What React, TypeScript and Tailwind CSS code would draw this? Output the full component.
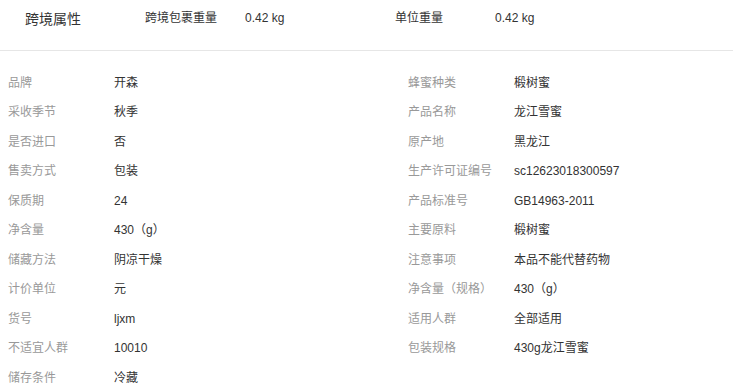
import React from "react";

type Attr = { label: string; value: string };

const LEFT: Attr[] = [
  { label: "品牌", value: "开森" },
  { label: "采收季节", value: "秋季" },
  { label: "是否进口", value: "否" },
  { label: "售卖方式", value: "包装" },
  { label: "保质期", value: "24" },
  { label: "净含量", value: "430（g）" },
  { label: "储藏方法", value: "阴凉干燥" },
  { label: "计价单位", value: "元" },
  { label: "货号", value: "ljxm" },
  { label: "不适宜人群", value: "10010" },
  { label: "储存条件", value: "冷藏" },
];

const RIGHT: Attr[] = [
  { label: "蜂蜜种类", value: "椴树蜜" },
  { label: "产品名称", value: "龙江雪蜜" },
  { label: "原产地", value: "黑龙江" },
  { label: "生产许可证编号", value: "sc12623018300597" },
  { label: "产品标准号", value: "GB14963-2011" },
  { label: "主要原料", value: "椴树蜜" },
  { label: "注意事项", value: "本品不能代替药物" },
  { label: "净含量（规格）", value: "430（g）" },
  { label: "适用人群", value: "全部适用" },
  { label: "包装规格", value: "430g龙江雪蜜" },
];

function AttrRow({ item }: { item: Attr }) {
  return (
    <div className="flex h-[29.5px] items-center pl-2 text-xs">
      <span className="w-[106px] shrink-0 text-[#999]">{item.label}</span>
      <span className="text-[#333]">{item.value}</span>
    </div>
  );
}

export default function App() {
  return (
    <main
      className="h-[391px] w-[733px] overflow-hidden bg-white"
      style={{ fontFamily: '"Liberation Sans", "Noto Sans CJK SC", sans-serif' }}
    >
      <header className="flex h-[51px] items-start border-b border-[#e6e6e6] pl-[25px] pt-[9px] leading-[18px] text-[#333]">
        <span className="w-[120px] text-sm">跨境属性</span>
        <div className="flex w-[250px] pt-px text-xs">
          <span className="w-[100px]">跨境包裹重量</span>
          <span>0.42 kg</span>
        </div>
        <div className="flex w-[250px] pt-px text-xs">
          <span className="w-[100px]">单位重量</span>
          <span>0.42 kg</span>
        </div>
      </header>

      <section className="grid grid-cols-[400px_1fr] pt-[17px]">
        <div className="flex flex-col">
          {LEFT.map((item) => (
            <AttrRow key={item.label} item={item} />
          ))}
        </div>
        <div className="flex flex-col">
          {RIGHT.map((item) => (
            <AttrRow key={item.label} item={item} />
          ))}
        </div>
      </section>
    </main>
  );
}
